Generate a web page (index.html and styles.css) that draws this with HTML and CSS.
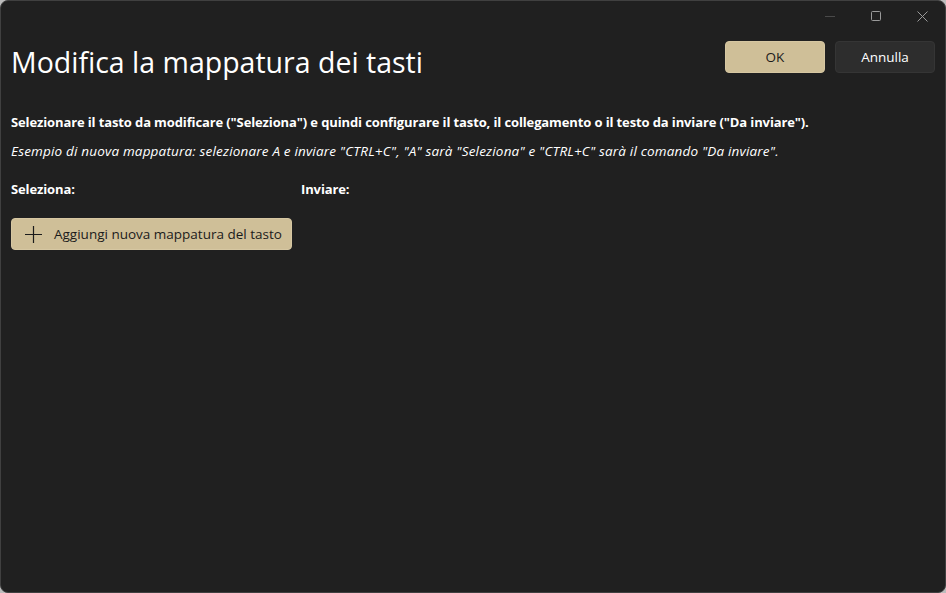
FILE: index.html
```html
<!DOCTYPE html>
<html lang="it">
<head>
    <meta charset="UTF-8">
    <title>Modifica la mappatura dei tasti</title>
    <link rel="stylesheet" href="styles.css">
</head>
<body>
<div class="window">
    <div class="caption">
        <span class="cap-btn min">
            <svg width="10" height="10" viewBox="0 0 10 10"><path d="M0 5.5H10" stroke="#4a4a4a" stroke-width="1"/></svg>
        </span>
        <span class="cap-btn">
            <svg width="10" height="10" viewBox="0 0 10 10"><rect x="0.5" y="0.5" width="9" height="9" rx="1" fill="none" stroke="#9a9a9a" stroke-width="1"/></svg>
        </span>
        <span class="cap-btn">
            <svg width="11" height="11" viewBox="0 0 11 11"><path d="M0.5 0.5L10.5 10.5M10.5 0.5L0.5 10.5" stroke="#9a9a9a" stroke-width="1"/></svg>
        </span>
    </div>
    <div class="header">
        <h1 class="title">Modifica la mappatura dei tasti</h1>
        <div class="actions">
            <a href="javascript:;" class="btn accent">OK</a>
            <a href="javascript:;" class="btn plain">Annulla</a>
        </div>
    </div>
    <p class="intro">Selezionare il tasto da modificare ("Seleziona") e quindi configurare il tasto, il collegamento o il testo da inviare ("Da inviare").</p>
    <p class="example">Esempio di nuova mappatura: selezionare A e inviare "CTRL+C", "A" sarà "Seleziona" e "CTRL+C" sarà il comando "Da inviare".</p>
    <div class="cols">
        <span class="col-head first">Seleziona:</span>
        <span class="col-head">Inviare:</span>
    </div>
    <a href="javascript:;" class="add-btn">
        <svg width="17" height="17" viewBox="0 0 17 17"><path d="M8.5 0V17M0 8.5H17" stroke="#1b1b1b" stroke-width="1.2"/></svg>
        <span>Aggiungi nuova mappatura del tasto</span>
    </a>
</div>
</body>
</html>
```

FILE: styles.css
```css
* {
    margin: 0;
    padding: 0;
    box-sizing: border-box;
}

html, body {
    width: 946px;
    height: 593px;
    overflow: hidden;
}

body {
    background-color: #bcbcbc;
    font-family: "Open Sans", "Noto Sans", sans-serif;
    color: #fff;
}

.window {
    width: 946px;
    height: 593px;
    background-color: #202020;
    border: 1px solid #404040;
    border-radius: 8px;
    padding: 0 10px 0 10px;
    display: flex;
    flex-direction: column;
    align-items: flex-start;
}

.caption {
    align-self: stretch;
    display: flex;
    justify-content: flex-end;
    height: 30px;
    margin-right: -10px;
}

.cap-btn {
    width: 46px;
    height: 30px;
    display: flex;
    align-items: center;
    justify-content: center;
}

.header {
    align-self: stretch;
    display: flex;
    justify-content: space-between;
    align-items: flex-start;
}

.title {
    font-weight: 400;
    font-size: 28.5px;
    line-height: 38px;
    margin-top: 12px;
    color: #fff;
}

.actions {
    display: flex;
    gap: 10px;
    margin-top: 10px;
}

.btn {
    display: block;
    width: 100px;
    height: 32px;
    line-height: 30px;
    text-align: center;
    text-decoration: none;
    font-size: 13.5px;
    border-radius: 4px;
    border: 1px solid transparent;
}

.btn.accent {
    background-color: #cfbf98;
    color: #1b1b1b;
    border-color: #d6c7a2;
}

.btn.plain {
    background-color: #2d2d2d;
    color: #fff;
    border-color: #353535;
}

.intro {
    margin-top: 32px;
    font-size: 13px;
    font-weight: 700;
    letter-spacing: -0.12px;
    line-height: 18px;
}

.example {
    margin-top: 11px;
    font-size: 13.5px;
    font-style: italic;
    letter-spacing: 0.18px;
    line-height: 18px;
}

.cols {
    display: flex;
    margin-top: 20px;
    font-size: 13px;
    font-weight: 700;
    letter-spacing: -0.12px;
    line-height: 18px;
}

.col-head.first {
    width: 290px;
}

.add-btn {
    margin-top: 20px;
    display: flex;
    align-items: center;
    gap: 12px;
    width: 281px;
    height: 32px;
    padding-left: 13px;
    background-color: #cfbf98;
    border: 1px solid #d6c7a2;
    border-radius: 4px;
    color: #1b1b1b;
    text-decoration: none;
    font-size: 13.5px;
}
```
